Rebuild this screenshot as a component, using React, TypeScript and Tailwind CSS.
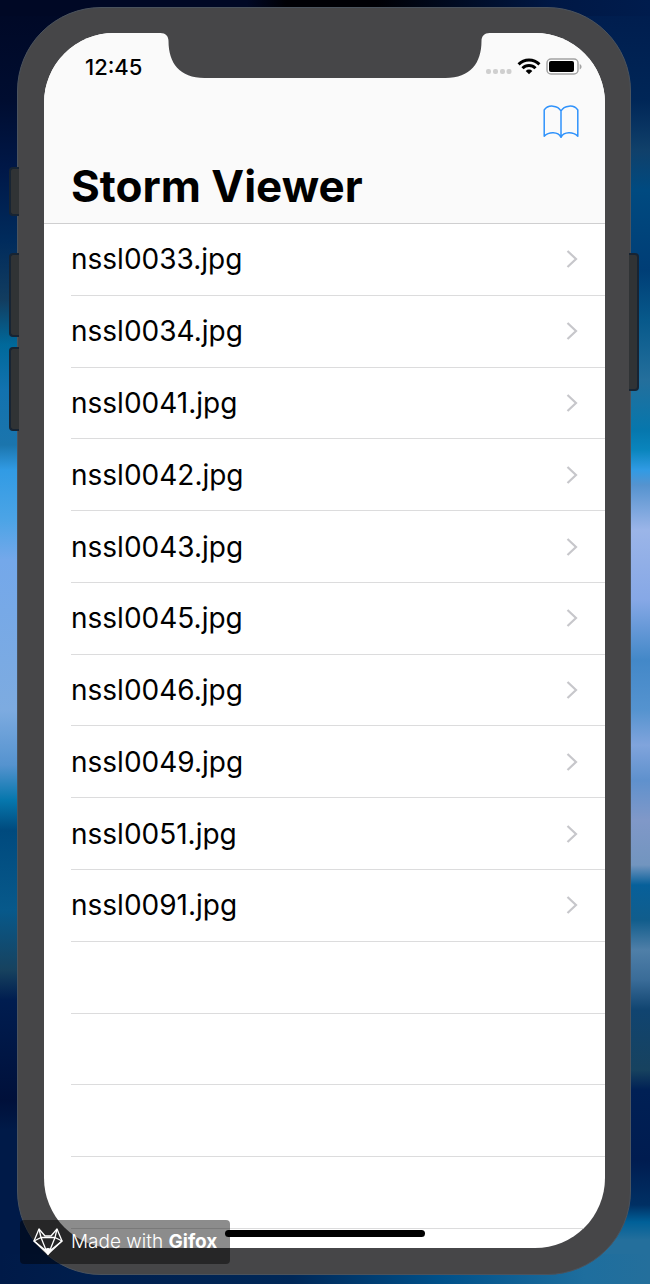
import React from "react";

const files = [
  "nssl0033.jpg",
  "nssl0034.jpg",
  "nssl0041.jpg",
  "nssl0042.jpg",
  "nssl0043.jpg",
  "nssl0045.jpg",
  "nssl0046.jpg",
  "nssl0049.jpg",
  "nssl0051.jpg",
  "nssl0091.jpg",
];

const emptyRows = [0, 1, 2, 3];

function Notch() {
  return (
    <svg
      className="absolute top-0 left-1/2 -translate-x-1/2"
      width="329"
      height="45"
      viewBox="0 0 329 45"
      fill="#464648"
      aria-hidden="true"
    >
      <path d="M0 0 C5 0 8 3 8 8 C8 30 19 45 44 45 H285 C310 45 321 30 321 8 C321 3 324 0 329 0 Z" />
    </svg>
  );
}

function StatusIcons() {
  return (
    <svg width="96" height="18" viewBox="0 0 96 18" aria-hidden="true">
      <g fill="#cfcfcf">
        <rect x="0" y="11" width="5" height="5" rx="2" />
        <rect x="7" y="11" width="5" height="5" rx="2" />
        <rect x="14" y="11" width="5" height="5" rx="2" />
        <rect x="20.500" y="11" width="5" height="5" rx="2" />
      </g>
      <g fill="none" stroke="#000" strokeWidth="3">
        <path d="M32.600 6.400 A14.500 14.500 0 0 1 53.400 6.400" />
        <path d="M36.500 10.300 A9 9 0 0 1 49.500 10.300" />
      </g>
      <path d="M43 16.200 L39.700 12.900 A4.700 4.700 0 0 1 46.300 12.900 Z" />
      <rect x="61" y="1" width="31" height="15" rx="4" fill="#fff" stroke="#a3a3a3" strokeWidth="1.500" />
      <rect x="63" y="3" width="25" height="11" rx="2" />
      <path d="M93.700 6 C96.200 7 96.200 10.500 93.700 11.500 Z" fill="#a3a3a3" />
    </svg>
  );
}

function BookIcon() {
  return (
    <svg
      width="36"
      height="34"
      viewBox="0 0 36 34"
      fill="none"
      stroke="#2f92fb"
      strokeWidth="1.500"
      strokeLinejoin="round"
      aria-hidden="true"
    >
      <path d="M18 6 C15 .2 5 -.8 1.200 5 V31.300 C6 26.500 15 26.500 18 32.300 C21 26.500 30 26.500 34.800 31.300 V5 C31 -.8 21 .2 18 6 V32.300" />
    </svg>
  );
}

function FoxIcon() {
  return (
    <svg
      width="30"
      height="28"
      viewBox="0 0 30 28"
      fill="none"
      stroke="#fff"
      strokeWidth="1.300"
      strokeLinejoin="round"
      aria-hidden="true"
    >
      <path d="M6 1 L1 13 L15 26 L29 13 L24 1 L18 8 H12 Z" />
      <path d="M6 1 L8 9.500 L1 13 L12 22 M8 9.500 L13 22 M8 9.500 H22 M24 1 L22 9.500 L29 13 L18 22 M22 9.500 L17 22" />
      <path d="M11.500 21.500 L15 20.500 L18.500 21.500 L15 26.500 Z" fill="#fff" />
    </svg>
  );
}

const sideButton =
  "absolute w-[10px] bg-[#303335] border-[#172433] border-y-2";

export default function App() {
  return (
    <main className="relative flex min-h-screen bg-[linear-gradient(90deg,#000825_0%,#000825_38%,#000005_44%,#000005_58%,#001845_85%,#001c4d_100%),linear-gradient(90deg,#001a48_0%,#002858_45%,#00518a_68%,#1e6e9e_90%,#246f9c_100%),linear-gradient(180deg,#000825_0px,#000d30_100px,#001848_170px,#002b5c_240px,#123d60_300px,#00699b_345px,#1272af_390px,#1b75ad_445px,#319be4_470px,#4ca4e6_520px,#74a8ea_560px,#7dabe0_710px,#5593cf_765px,#0677ad_800px,#004a7e_830px,#07598b_910px,#17425f_970px,#001d50_1000px,#00103a_1100px,#001a48_1130px),linear-gradient(180deg,#001c4d_0px,#002657_100px,#10406a_150px,#004a80_190px,#003e76_270px,#07598b_320px,#246f9c_380px,#0677ad_430px,#0a85bd_450px,#319be4_470px,#5593cf_485px,#9bb5e8_530px,#86a8e6_600px,#4388c8_660px,#5593cf_710px,#80a4dc_745px,#5f91cd_780px,#8098c8_820px,#7295bf_865px,#07609a_885px,#115d8c_920px,#4f7fa8_950px,#3a6c98_980px,#104470_1010px,#17425f_1070px,#002055_1090px,#001c50_1160px,#003064_1205px,#006098_1222px,#246f9c_1240px)] bg-[size:100%_16px,100%_30px,50%_100%,50%_100%] bg-[position:left_top,left_bottom,left_top,right_top] bg-no-repeat pt-[7px] pr-[19px] pb-[9px] pl-[17px] font-['Inter',sans-serif] text-black">
      <div className="relative flex flex-1 rounded-[84px] border border-[#4b535d] bg-[#464648] pt-[25px] pr-[25px] pb-[26px] pl-[26px]">
        <section className="relative flex flex-1 flex-col overflow-hidden rounded-[70px] bg-white">
          <header className="flex flex-col border-b border-[#cfcfd0] bg-[#fafafa]">
            <Notch />
            <div className="flex h-[68px] items-center justify-between pr-[23px] pl-[41px]">
              <time className="text-[22px] leading-6 font-medium">12:45</time>
              <StatusIcons />
            </div>
            <div className="flex justify-end pr-[26px]">
              <button type="button" aria-label="Open reading list" className="mt-1">
                <BookIcon />
              </button>
            </div>
            <h1 className="mt-[18px] mb-2 pl-[27px] text-[44px] leading-[58px] font-bold">
              Storm Viewer
            </h1>
          </header>

          <ul className="mb-[19px] grid flex-1 auto-rows-fr pl-[27px]">
            {files.map((file) => (
              <li key={file} className="border-b border-[#dcdcdd]">
                <a href="#" className="flex h-full items-center justify-between pr-[27px]">
                  <span className="text-[28px] leading-9">{file}</span>
                  <svg
                    width="12"
                    height="18"
                    viewBox="0 0 12 18"
                    fill="none"
                    stroke="#c7c7cb"
                    strokeWidth="2.200"
                    aria-hidden="true"
                  >
                    <path d="M1.500 1 L10 9 L1.500 17" />
                  </svg>
                </a>
              </li>
            ))}
            {emptyRows.map((row) => (
              <li key={row} className="border-b border-[#dcdcdd]" />
            ))}
          </ul>
        </section>
      </div>

      <span className={sideButton + " left-[9px] top-[167px] h-[49px] rounded-l border-l-2"} />
      <span className={sideButton + " left-[9px] top-[253px] h-[84px] rounded-l border-l-2"} />
      <span className={sideButton + " left-[9px] top-[347px] h-[84px] rounded-l border-l-2"} />
      <span className={sideButton + " right-[11px] top-[253px] h-[138px] rounded-r border-r-2"} />

      <div className="absolute bottom-5 left-5 flex h-11 w-[210px] items-center gap-2 rounded-sm bg-black/45 pl-[13px] text-[19px] leading-6 whitespace-nowrap text-white">
        <FoxIcon />
        <span className="font-light">
          Made with <strong className="font-bold">Gifox</strong>
        </span>
      </div>
      <span className="absolute bottom-[47px] left-1/2 h-[7px] w-[200px] -translate-x-1/2 rounded-full bg-black" />
    </main>
  );
}
